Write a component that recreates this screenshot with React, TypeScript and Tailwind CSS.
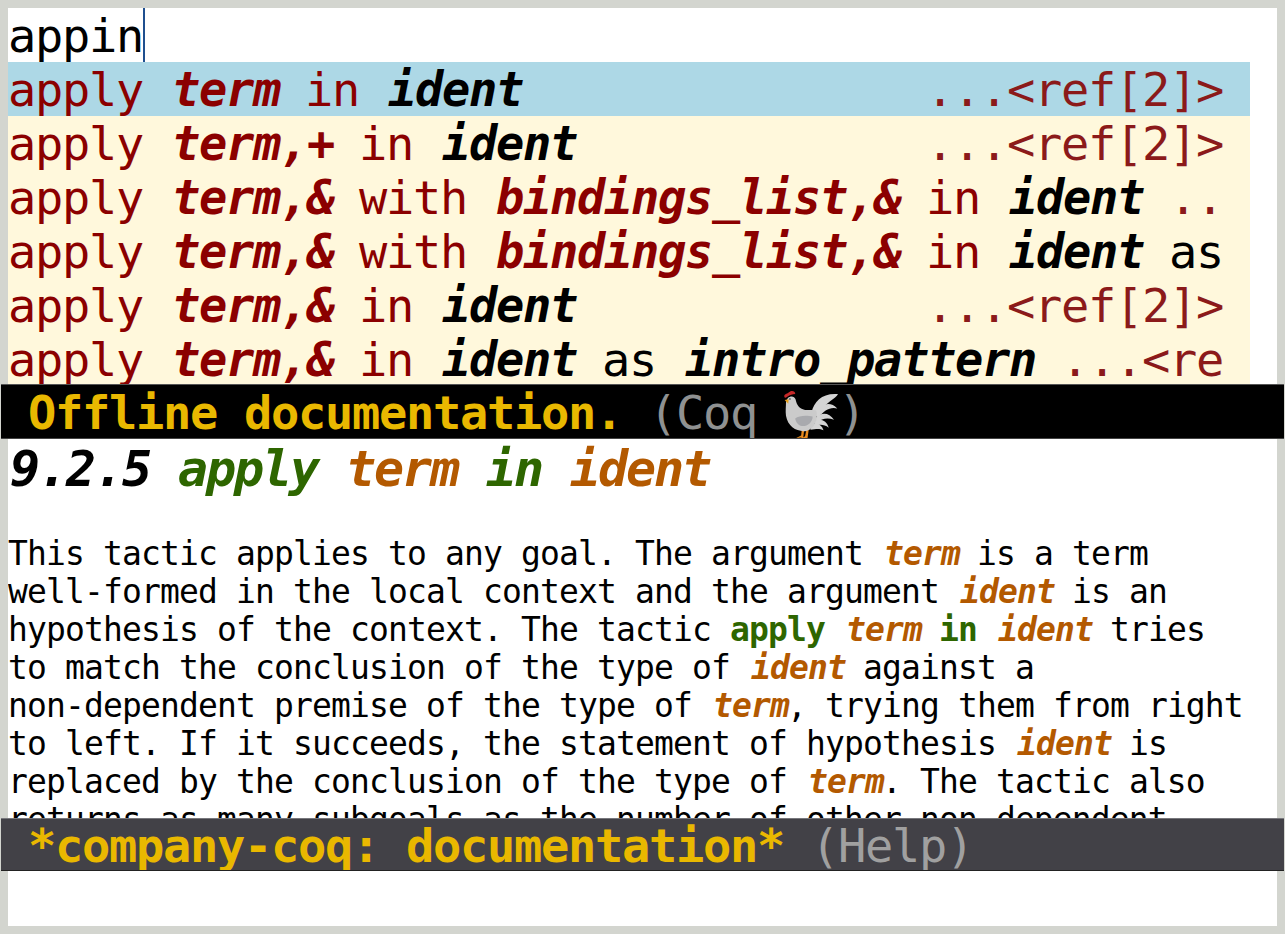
import React from "react";

const mono = "[font-family:'DejaVu_Sans_Mono',monospace]";

const T = ({ c }: { c: string }) => <span className="ml-[2px] mr-[-2px] font-bold italic text-[#8b0000]">{c}</span>;
const I = ({ c }: { c: string }) => <span className="ml-[2px] mr-[-2px] font-bold italic text-black">{c}</span>;
const K = ({ c }: { c: string }) => <span className="text-black">{c}</span>;
const R = ({ c }: { c: string }) => <span className="text-[#8b1a1a]">{c}</span>;

const O = ({ c }: { c: string }) => <span className="ml-[2px] mr-[-2px] font-bold italic text-[#b35900]">{c}</span>;
const G = ({ c }: { c: string }) => <span className="font-bold text-[#2e6600]">{c}</span>;

function Row({ active, children }: { active?: boolean; children: React.ReactNode }) {
  return (
    <div
      className={`h-[54px] overflow-hidden whitespace-pre text-[47px] leading-[56px] tracking-[-1.3px] text-[#8b0000] ${
        active ? "bg-[#add8e6]" : "bg-[#fff8dc]"
      }`}
    >
      {children}
    </div>
  );
}

function Rooster() {
  return (
    <svg width="54" height="49" viewBox="42 30 164 148" className="mt-1 inline-block shrink-0" aria-hidden="true">
      <path d="M126 96C134 64 158 38 206 42C200 56 168 68 146 100Z" fill="#d4d4d4" />
      <path d="M134 104C150 74 180 60 204 86C182 80 164 92 146 114Z" fill="#d4d4d4" />
      <path d="M136 116C154 96 178 96 194 120C174 112 158 116 142 128Z" fill="#d4d4d4" />
      <path d="M136 124C152 114 172 122 178 144C164 134 152 134 136 138Z" fill="#d4d4d4" />
      <path d="M128 134C142 128 158 136 162 152C150 146 140 148 122 150Z" fill="#d4d4d4" />
      <path d="M96 150L94 168L78 176L94 174L100 179L103 152Z" fill="#e88a1c" />
      <path d="M110 150L106 170L93 178L108 175L113 179L117 150Z" fill="#e88a1c" />
      <path
        d="M48 68C50 46 73 44 77 58C81 76 87 86 106 90C120 92 130 88 140 92C146 116 136 148 110 154C82 158 54 142 48 108C46 92 48 80 48 68Z"
        fill="#cbcbcb"
      />
      <path d="M76 116C86 106 114 106 129 110C129 128 112 141 96 139C86 137 78 128 76 116Z" fill="#a9aaae" />
      <path d="M43 50C41 41 54 42 58 36C63 30 77 31 76 42C68 42 60 45 52 50C48 53 44 55 43 50Z" fill="#c62828" />
      <path d="M44 60L56 58L55 71Z" fill="#e8a11c" />
      <circle cx="60" cy="57" r="2.5" fill="#333" />
    </svg>
  );
}

const lineCls = "h-[38px] whitespace-pre";

export default function App() {
  return (
    <div className={`flex h-[934px] w-full flex-col overflow-hidden bg-[#d3d5cf] pt-2 ${mono}`}>
      <div className="mx-2 h-[376px] shrink-0 overflow-hidden bg-white">
        <div className="flex h-[54px] items-center whitespace-pre pt-[2px] text-[47px] leading-[52px] tracking-[-1.3px] text-black">
          <span>appin</span>
          <span className="mt-[-2px] h-[54px] w-[2px] bg-[#1f4f8f]" />
        </div>
        <div className="mr-[27px]">
          <Row active>
            apply <T c="term" /> in <I c="ident" />{"               "}
            <R c="...<ref[2]>" />
          </Row>
          <Row>
            apply <T c="term,+" /> in <I c="ident" />{"             "}
            <R c="...<ref[2]>" />
          </Row>
          <Row>
            apply <T c="term,&" /> with <T c="bindings_list,&" /> in <I c="ident" /> <R c=".." />
          </Row>
          <Row>
            apply <T c="term,&" /> with <T c="bindings_list,&" /> in <I c="ident" /> <K c="as" />
          </Row>
          <Row>
            apply <T c="term,&" /> in <I c="ident" />{"             "}
            <R c="...<ref[2]>" />
          </Row>
          <Row>
            apply <T c="term,&" /> in <I c="ident" /> <K c="as" /> <I c="intro_pattern" /> <R c="...<re" />
          </Row>
        </div>
      </div>

      <div className="mx-px flex h-[55px] shrink-0 items-center overflow-hidden whitespace-pre border-y border-t-[#555] border-b-[#444] bg-black pt-[2px] text-[47px] leading-[50px] tracking-[-1.3px]">
        <span className="font-bold text-[#e9b800]"> Offline documentation.</span>
        <span className="text-[#8f9191]"> (Coq </span>
        <Rooster />
        <span className="text-[#8f9191]">)</span>
      </div>

      <div className="mx-2 h-[379px] shrink-0 overflow-hidden bg-white">
        <div className="h-[58px] whitespace-pre pl-[2px] text-[50px] leading-[60px] tracking-[-2.1px] font-bold italic text-black">
          9.2.5 <span className="text-[#2e6600]">apply</span> <span className="text-[#b35900]">term</span>{" "}
          <span className="text-[#2e6600]">in</span> <span className="text-[#b35900]">ident</span>
        </div>
        <div className="mt-[38px] text-[33px] leading-[38px] tracking-[-0.87px] text-black">
          <div className={lineCls}>
            This tactic applies to any goal. The argument <O c="term" /> is a term
          </div>
          <div className={lineCls}>
            well-formed in the local context and the argument <O c="ident" /> is an
          </div>
          <div className={lineCls}>
            hypothesis of the context. The tactic <G c="apply" /> <O c="term" /> <G c="in" /> <O c="ident" /> tries
          </div>
          <div className={lineCls}>
            to match the conclusion of the type of <O c="ident" /> against a
          </div>
          <div className={lineCls}>
            non-dependent premise of the type of <O c="term" />, trying them from right
          </div>
          <div className={lineCls}>
            to left. If it succeeds, the statement of hypothesis <O c="ident" /> is
          </div>
          <div className={lineCls}>
            replaced by the conclusion of the type of <O c="term" />. The tactic also
          </div>
          <div className={lineCls}>returns as many subgoals as the number of other non-dependent</div>
        </div>
      </div>

      <div className="mx-px flex h-[53px] shrink-0 items-center overflow-hidden whitespace-pre border-y border-t-[#77777c] border-b-[#222] bg-[#424147] pt-[2px] text-[47px] leading-[50px] tracking-[-1.3px]">
        <span className="font-bold text-[#e9b800]"> *company-coq: documentation*</span>
        <span className="text-[#a0a0a0]"> (Help)</span>
      </div>

      <div className="mx-2 h-[55px] shrink-0 bg-white" />
    </div>
  );
}
